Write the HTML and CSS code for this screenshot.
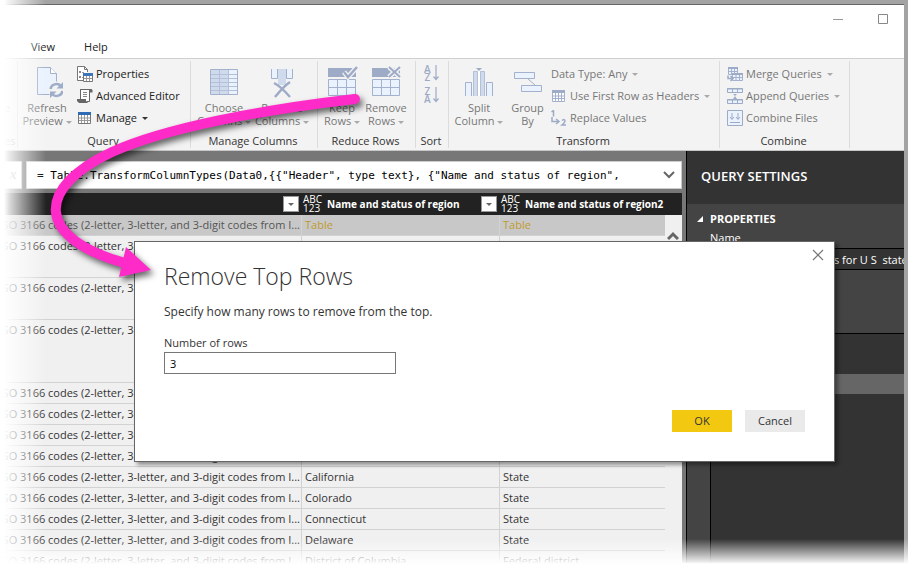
FILE: index.html
```html
<!DOCTYPE html>
<html lang="en">
<head>
<meta charset="utf-8">
<title>Query Editor</title>
<link rel="stylesheet" href="styles.css">
</head>
<body>
<div class="window">
  <header class="titlebar">
    <div class="window-buttons">
      <button type="button" aria-label="Minimize"><svg width="11" height="11" viewBox="0 0 11 11"><path d="M0 5.500h10" stroke="#999"/></svg></button>
      <button type="button" aria-label="Maximize"><svg width="11" height="11" viewBox="0 0 11 11"><path d="M.5.5h9v9h-9z" fill="none" stroke="#888"/></svg></button>
    </div>
    <nav class="tabs"><a href="#view">View</a><a href="#help">Help</a></nav>
  </header>

  <div class="ribbon">
    <section class="group group-cut">
      <div class="group-body"><span class="cut-text">e</span></div>
      <h2 class="cut-text">es</h2>
    </section>

    <section class="group group-query">
      <div class="group-body">
        <button type="button" class="big">
          <svg width="32" height="32" viewBox="0 0 32 32"><path d="M6.500 1.500h13l6 6v21h-19z" fill="#eaf2fd" stroke="#a3b1cd"/><path d="M19.500 1.500v6h6" fill="#fff" stroke="#a3b1cd"/><circle cx="25.500" cy="24" r="8.500" fill="#f3f3f3"/><path d="M19.500 23a6 5.500 0 0 1 10.500-3M31.500 25a6 5.500 0 0 1-10.500 3" fill="none" stroke="#9eadca" stroke-width="2.500"/><path d="M32 16v6.500h-6.500zM19 32v-6.500h6.500z" fill="#9eadca"/></svg>
          <span>Refresh</span><span>Preview <i class="caret"></i></span>
        </button>
        <div class="stack">
          <button type="button" class="small on"><svg width="16" height="16" viewBox="0 0 16 16"><path d="M6 14.500H.5V.5h7l3 3V6" fill="#fff" stroke="#777"/><path d="M7.500.5v3h3" fill="none" stroke="#777"/><path d="M2 5h2v2H2zM2 10h2v2H2z" fill="#888"/><path d="M5 6.500h2M5 11.500h1" stroke="#999"/><path d="M6.500 7.500h9v8h-9z" fill="#fff" stroke="#777"/><path d="M6 7h10v3H6z" fill="#3e74b8"/><path d="M7 12.500h8M9.500 10v5M12.500 10v5" stroke="#999"/></svg>Properties</button>
          <button type="button" class="small on"><svg width="16" height="16" viewBox="0 0 16 16"><path d="M3.500 11V1.500H14M12.500 4v8.500l-2 2" fill="none" stroke="#666"/><path d="M4 2h8v11H4z" fill="#fff"/><path d="M3.500 11V1.500h9v12h-3" fill="none" stroke="#666"/><path d="M12 1h2.500l1 1v2.500H12zM0 11h9v2l1.500 2H2l-2-2z" fill="#666"/><path d="M6 4.500h4M6 6.500h4M6 8.500h4" stroke="#888"/></svg>Advanced Editor</button>
          <button type="button" class="small on"><svg width="16" height="16" viewBox="0 0 16 16"><path d="M1.500 2.500h12v11h-12z" fill="#fff" stroke="#777"/><path d="M1 2h13v3H1z" fill="#2f6cb5"/><path d="M2 8h11M2 10.500h11M4.500 5v8M7.500 5v8M10.500 5v8" stroke="#999"/></svg>Manage <i class="caret"></i></button>
        </div>
      </div>
      <h2>Query</h2>
    </section>

    <section class="group group-columns">
      <div class="group-body">
        <button type="button" class="big">
          <svg width="32" height="32" viewBox="0 0 32 32"><path d="M2.500 3.500h27v25h-27z" fill="#eaf2fd"/><path d="M3 4h18v24H3z" fill="#cfdbec"/><path d="M3 8.500h26M3 12.500h26M3 16.500h26M3 20.500h26M3 24.500h26M11.500 4v24M20.500 4v24" stroke="#b4c0d8"/><path d="M2.500 3.500h27v25h-27z" fill="none" stroke="#a3b1cd"/></svg>
          <span>Choose</span><span>Columns <i class="caret"></i></span>
        </button>
        <button type="button" class="big">
          <svg width="32" height="32" viewBox="0 0 32 32"><path d="M5.500 3v9.500h6V3M20.500 3v9.500h6V3" fill="#eaf2fd" stroke="#a3b1cd"/><path d="M12 3h8v16h-8z" fill="#cfdbec"/><path d="M8 17c6 3 10 7 16 14M24 16C18 20 14 25 9 31" fill="none" stroke="#9eabc7" stroke-width="2.500"/></svg>
          <span>Remove</span><span>Columns <i class="caret"></i></span>
        </button>
      </div>
      <h2>Manage Columns</h2>
    </section>

    <section class="group group-rows">
      <div class="group-body">
        <button type="button" class="big">
          <svg width="32" height="32" viewBox="0 0 32 32"><path d="M2 2h28v9H2z" fill="#9eabc7"/><path d="M2.500 13.500h27v16h-27z" fill="#eaf2fd" stroke="#a3b1cd"/><path d="M3 21.500h26M11.500 14v15M20.500 14v15" stroke="#a3b1cd"/><path d="m18 6 4 5 9-10" fill="none" stroke="#f3f3f3" stroke-width="5"/><path d="m18 6 4 5 9-10" fill="none" stroke="#9eabc7" stroke-width="2.500"/></svg>
          <span>Keep</span><span>Rows <i class="caret"></i></span>
        </button>
        <button type="button" class="big">
          <svg width="32" height="32" viewBox="0 0 32 32"><path d="M2 2h28v9H2z" fill="#9eabc7"/><path d="M2.500 13.500h27v16h-27z" fill="#eaf2fd" stroke="#a3b1cd"/><path d="M3 21.500h26M11.500 14v15M20.500 14v15" stroke="#a3b1cd"/><path d="m19 1 11 10M30 1 19 11" fill="none" stroke="#f3f3f3" stroke-width="5"/><path d="m19 1 11 10M30 1 19 11" fill="none" stroke="#9eabc7" stroke-width="2"/></svg>
          <span>Remove</span><span>Rows <i class="caret"></i></span>
        </button>
      </div>
      <h2>Reduce Rows</h2>
    </section>

    <section class="group group-sort">
      <div class="group-body">
        <button type="button" class="sort" aria-label="Sort ascending"><span>A<br>Z</span><svg width="6" height="16" viewBox="0 0 6 16"><path d="M3 0v14M.5 11.500 3 14.500l2.500-3" fill="none" stroke="#9eabc7" stroke-width="1.200"/></svg></button>
        <button type="button" class="sort" aria-label="Sort descending"><span>Z<br>A</span><svg width="6" height="16" viewBox="0 0 6 16"><path d="M3 0v14M.5 11.500 3 14.500l2.500-3" fill="none" stroke="#9eabc7" stroke-width="1.200"/></svg></button>
      </div>
      <h2>Sort</h2>
    </section>

    <section class="group group-transform">
      <div class="group-body">
        <button type="button" class="big">
          <svg width="32" height="32" viewBox="0 0 32 32"><path d="M2.500 30V16.500h6V30M23.500 30V16.500h6V30" fill="#eaf2fd" stroke="#a3b1cd"/><path d="M10.500 30V5.500h4V30M17.500 30V5.500h4V30" fill="#cfdbec" stroke="#b4c0d8"/><path d="M16 5v25" stroke="#fff" stroke-width="2"/><path d="M13 2h6l-3 3z" fill="#9eabc7"/></svg>
          <span>Split</span><span>Column <i class="caret"></i></span>
        </button>
        <button type="button" class="big">
          <svg width="32" height="32" viewBox="0 0 32 32"><path d="M2.500 6.500h20v6h-20zM9.500 19.500h20v6h-20z" fill="#eaf2fd" stroke="#a3b1cd"/><path d="m16 13 7 6" stroke="#a3b1cd"/></svg>
          <span>Group</span><span>By</span>
        </button>
        <div class="stack">
          <button type="button" class="small">Data Type: Any <i class="caret"></i></button>
          <button type="button" class="small"><svg width="16" height="16" viewBox="0 0 16 16"><path d="M1.500 2.500h12v11h-12z" fill="#fff" stroke="#a3b1cd"/><path d="M1 2h13v3H1z" fill="#9eabc7"/><path d="M2 8h11M2 10.500h11M4.500 5v8M7.500 5v8M10.500 5v8" stroke="#a3b1cd"/></svg>Use First Row as Headers <i class="caret"></i></button>
          <button type="button" class="small"><svg width="16" height="16" viewBox="0 0 16 16"><path d="M.5 2 2.500.5v6M1 7v4.500h6M5 9l3 2.500L5 14M11 10.500q3-2 3 .5 0 1.500-3 4h4" fill="none" stroke="#9eabc7" stroke-width="1.500"/></svg>Replace Values</button>
        </div>
      </div>
      <h2>Transform</h2>
    </section>

    <section class="group group-combine">
      <div class="group-body">
        <div class="stack">
          <button type="button" class="small"><svg width="16" height="16" viewBox="0 0 16 16"><path d="M1.500 1.500h9v7h-9z" fill="#eaf2fd" stroke="#a3b1cd"/><path d="M1 1h10v2H1z" fill="#9eabc7"/><path d="M2 5.500h8M4.500 3v5M7.500 3v5" stroke="#a3b1cd"/><path d="M5.500 7.500h10v7h-10z" fill="#eaf2fd" stroke="#a3b1cd"/><path d="M5 7h11v2H5z" fill="#9eabc7"/><path d="M6 11.500h9M9 9v5M12.500 9v5" stroke="#a3b1cd"/><path d="M1 9.500v3h4M3.500 10l2.500 2.500L3.500 15" fill="none" stroke="#9eabc7" stroke-width="1.500"/></svg>Merge Queries <i class="caret"></i></button>
          <button type="button" class="small"><svg width="16" height="16" viewBox="0 0 16 16"><path d="M.5.5h15v4H.5zM.5 11.500h15v4H.5z" fill="#eaf2fd" stroke="#9eabc7"/><path d="M0 1h16M0 12h16M5.500 1v4M10.500 1v4M5.500 12v4M10.500 12v4" stroke="#9eabc7"/><path d="M6 6h4L8 8zM6 11h4L8 8z" fill="#9eabc7"/></svg>Append Queries <i class="caret"></i></button>
          <button type="button" class="small"><svg width="16" height="16" viewBox="0 0 16 16"><path d="M.5.5h15v15H.5z" fill="#eaf2fd" stroke="#9eabc7"/><path d="M5 3v6M11 3v6M3 7l2 2.500L7 7M9 7l2 2.500L13 7M3 12.500h10" fill="none" stroke="#9eabc7"/></svg>Combine Files</button>
        </div>
      </div>
      <h2>Combine</h2>
    </section>
  </div>

  <main class="workspace">
    <div class="editor">
      <div class="formula">
        <button type="button" class="fx" aria-label="Add step">x</button>
        <div class="formula-box">
          <input type="text" aria-label="Formula" value='= Table.TransformColumnTypes(Data0,{{"Header", type text}, {"Name and status of region",'>
          <button type="button" aria-label="Expand formula"><svg width="12" height="8" viewBox="0 0 12 8"><path d="m1 1 5 5 5-5" fill="none" stroke="#666" stroke-width="2"/></svg></button>
        </div>
      </div>
      <div class="grid">
        <table>
          <colgroup><col class="c1"><col class="c2"><col><col class="c4"></colgroup>
          <thead>
            <tr>
              <th><div class="head"><button type="button" class="filter" aria-label="Filter"><i class="caret"></i></button></div></th>
              <th><div class="head"><span class="type">ABC<br>123</span><span>Name and status of region</span><button type="button" class="filter" aria-label="Filter"><i class="caret"></i></button></div></th>
              <th colspan="2"><div class="head"><span class="type">ABC<br>123</span><span>Name and status of region2</span></div></th>
            </tr>
          </thead>
          <tbody>
            <tr class="selected"><td><div class="tail">DISO 3166 codes (2-letter, 3-letter, and 3-digit codes from I...</div></td><td><a href="#t1">Table</a></td><td><a href="#t2">Table</a></td><td class="bar"></td></tr>
            <tr class="h2"><td><div class="tail">DISO 3166 codes (2-letter, 3-letter, and 3-digit codes from I...</div></td><td></td><td></td><td class="bar"></td></tr>
            <tr class="h2"><td><div class="tail">DISO 3166 codes (2-letter, 3-letter, and 3-digit codes from I...</div></td><td></td><td></td><td class="bar"></td></tr>
            <tr class="h3"><td><div class="tail">DISO 3166 codes (2-letter, 3-letter, and 3-digit codes from I...</div></td><td></td><td></td><td class="bar"></td></tr>
            <tr><td><div class="tail">DISO 3166 codes (2-letter, 3-letter, and 3-digit codes from I...</div></td><td></td><td></td><td class="bar"></td></tr>
            <tr><td><div class="tail">DISO 3166 codes (2-letter, 3-letter, and 3-digit codes from I...</div></td><td></td><td></td><td class="bar"></td></tr>
            <tr><td><div class="tail">DISO 3166 codes (2-letter, 3-letter, and 3-digit codes from I...</div></td><td></td><td></td><td class="bar"></td></tr>
            <tr><td><div class="tail">DISO 3166 codes (2-letter, 3-letter, and 3-digit codes from I...</div></td><td></td><td></td><td class="bar"></td></tr>
            <tr><td><div class="tail">DISO 3166 codes (2-letter, 3-letter, and 3-digit codes from I...</div></td><td>California</td><td>State</td><td class="bar"></td></tr>
            <tr><td><div class="tail">DISO 3166 codes (2-letter, 3-letter, and 3-digit codes from I...</div></td><td>Colorado</td><td>State</td><td class="bar"></td></tr>
            <tr><td><div class="tail">DISO 3166 codes (2-letter, 3-letter, and 3-digit codes from I...</div></td><td>Connecticut</td><td>State</td><td class="bar"></td></tr>
            <tr><td><div class="tail">DISO 3166 codes (2-letter, 3-letter, and 3-digit codes from I...</div></td><td>Delaware</td><td>State</td><td class="bar"></td></tr>
            <tr><td><div class="tail">DISO 3166 codes (2-letter, 3-letter, and 3-digit codes from I...</div></td><td>District of Columbia</td><td>Federal district</td><td class="bar"></td></tr>
          </tbody>
        </table>
        <button type="button" class="scroll-up" aria-label="Scroll up"><svg width="12" height="10" viewBox="0 0 12 10"><path d="m1 8 5-5 5 5" fill="none" stroke="#666" stroke-width="3"/></svg></button>
      </div>
    </div>

    <aside class="settings">
      <h2>QUERY SETTINGS</h2>
      <section class="properties">
        <h3><svg width="6" height="6" viewBox="0 0 6 6"><path d="M6 0v6H0z" fill="#fff"/></svg>PROPERTIES</h3>
        <label for="qname">Name</label>
        <input id="qname" type="text" value="s for U S  state">
      </section>
      <div class="steps"><div class="step-selected"></div></div>
    </aside>
  </main>
</div>

<div class="fade-left"></div>
<div class="fade-bottom"></div>

<dialog open class="dialog" aria-labelledby="dialog-title">
  <button type="button" class="close" aria-label="Close"><svg width="12" height="12" viewBox="0 0 12 12"><path d="m1 1 10 10M11 1 1 11" stroke="#777" stroke-width="1.200"/></svg></button>
  <h1 id="dialog-title">Remove Top Rows</h1>
  <p>Specify how many rows to remove from the top.</p>
  <label for="rows">Number of rows</label>
  <input id="rows" type="text" value="3">
  <div class="actions">
    <button type="button" class="ok">OK</button>
    <button type="button">Cancel</button>
  </div>
</dialog>

<svg class="arrow" width="400" height="300" viewBox="0 0 400 300" aria-hidden="true">
  <path d="M355 99C260 110 165 128 112 152C35 188 35 238 125 263" fill="none" stroke="#ff2bc8" stroke-width="10"/>
  <circle cx="355" cy="99" r="5" fill="#ff2bc8"/>
  <path d="M126 247 151 270 119 277z" fill="#ff2bc8"/>
</svg>
</body>
</html>
```

FILE: styles.css
```css
* { box-sizing: border-box; }

body {
  margin: 0;
  height: 100vh;
  overflow: hidden;
  position: relative;
  display: flex;
  padding: 4px;
  background: #a3a3a3;
  font: 11px/14px "Open Sans", "Noto Sans", sans-serif;
  color: #333;
}

button, input { font: inherit; color: inherit; border: 0; padding: 0; margin: 0; background: none; }
h1, h2, h3, p { margin: 0; font: inherit; }
a { color: inherit; text-decoration: none; }
svg { flex: none; display: block; }

.window {
  flex: 1;
  min-width: 0;
  display: flex;
  flex-direction: column;
  overflow: hidden;
  background: #fff;
  border-top: 1px solid #666;
}

.titlebar { display: flex; flex-direction: column; border-bottom: 1px solid #d0d0d0; }
.window-buttons { display: flex; justify-content: flex-end; gap: 34px; height: 28px; padding: 0 15px; align-items: center; }
.tabs { display: flex; gap: 29px; height: 25px; padding: 7px 27px 0; color: #222; }

.ribbon { display: flex; height: 92px; background: #f3f3f3; border-bottom: 1px solid #c8c8c8; padding: 2px 0; }
.group { flex: none; display: flex; flex-direction: column; border-right: 1px solid #dcdcdc; white-space: nowrap; }
.group h2 { text-align: center; color: #333; padding-right: 2px; }
.group-body { height: 73px; display: flex; color: #777; }
.group-cut { width: 14px; }
.group-cut .group-body { align-items: center; padding-top: 21px; }
.group .cut-text { color: #aaa; text-align: left; }
.group-query { width: 173px; }
.group-columns { width: 127px; }
.group-rows { width: 98px; }
.group-sort { width: 33px; }
.group-transform { width: 271px; }
.group-combine { width: 130px; }
.group-columns .group-body { padding-left: 4px; }
.group-rows .group-body { padding-left: 2px; }
.group-transform .group-body { padding-left: 1px; }
.group-combine .group-body { padding-left: 7px; }

.big { width: 58px; display: flex; flex-direction: column; align-items: center; padding-top: 5px; line-height: 13px; }
.big svg { margin-bottom: 3px; }
.group-rows .big { width: 44px; }
.group-transform .big + .big { width: 39px; }
.stack { display: flex; flex-direction: column; padding-top: 2px; }
.group-query .stack { padding-left: 1px; }
.group-transform .stack { padding-left: 4px; }
.small { display: flex; align-items: center; gap: 3px; height: 22px; }
.small.on { color: #222; }
.caret { display: inline-block; width: 0; height: 0; border: 3px solid transparent; border-top-color: currentColor; border-bottom: 0; vertical-align: middle; }
.small .caret, .big .caret { color: #aaa; }
.small.on .caret { color: #333; }
.small .caret { margin-left: 2px; }
.group-sort .group-body { flex-direction: column; gap: 6px; padding: 4px 0 0 8px; }
.sort { display: flex; align-items: center; gap: 2px; color: #9eabc7; font-size: 10px; line-height: 8px; font-weight: 600; }

.workspace { flex: 1; min-height: 0; display: flex; background: #777; }
.editor { flex: 1; min-width: 0; display: flex; flex-direction: column; padding-right: 4px; }
.formula { display: flex; gap: 4px; padding: 10px 0 4px; }
.fx { width: 18px; height: 28px; background: #fff; border: 1px solid #ccc; font: italic bold 14px "Liberation Serif", serif; color: #bbb; }
.formula-box { flex: 1; display: flex; align-items: center; height: 28px; background: #fff; border: 1px solid #ccc; padding: 0 6px 0 10px; }
.formula-box input { flex: 1; min-width: 0; font: 11px "DejaVu Sans Mono", monospace; color: #000; }

.grid { flex: 1; min-height: 0; overflow: hidden; position: relative; background: #f0f0f0; }
table { width: 100%; border-collapse: separate; border-spacing: 0; table-layout: fixed; }
.c1 { width: 298px; }
.c2 { width: 198px; }
.c4 { width: 17px; }
th { height: 22px; padding: 0; background: #222; color: #fff; font-size: 10px; font-weight: 700; text-align: left; }
.head { display: flex; align-items: center; height: 22px; padding: 0 3px 0 1px; gap: 5px; white-space: nowrap; }
.type { line-height: 9px; font-weight: 400; }
.filter { width: 16px; height: 16px; margin-left: auto; background: #fff; border: 1px solid #999; color: #666; display: flex; align-items: center; justify-content: center; }
td { height: 21px; padding: 3px 3px 0; vertical-align: top; white-space: nowrap; overflow: hidden; border-right: 1px solid #d2d2d2; border-bottom: 1px solid #d2d2d2; }
td:first-child { padding-left: 0; padding-right: 1px; }
td:nth-child(3) { border-right: 0; }
td.bar { border: 0; background: #f0f0f0; }
.tail { display: flex; justify-content: flex-end; overflow: hidden; }
.selected { background: #c8c8c8; color: #555; }
.selected a { color: #bf9a30; }
.h2 td { height: 42px; }
.h3 td { height: 63px; }
.scroll-up { position: absolute; right: 3px; top: 38px; }

.settings { width: 218px; display: flex; flex-direction: column; background: #444; border-left: 1px solid #000; color: #fff; overflow: hidden; }
.settings h2 { height: 53px; padding: 15px 14px; background: #333; font-size: 13px; line-height: 20px; font-weight: 600; }
.properties { height: 129px; padding: 5px 0 0 23px; display: flex; flex-direction: column; }
.properties h3 { display: flex; align-items: center; gap: 7px; margin-left: -13px; font-weight: 700; line-height: 16px; height: 20px; }
.properties label { line-height: 17px; margin-bottom: 2px; }
.properties input { width: 100%; height: 22px; background: #333; border: 1px solid #000; border-right: 0; padding-left: 123px; }
.steps { flex: 1; margin-left: 23px; padding-top: 40px; background: #333; border: 1px solid #000; border-width: 1px 0 0 1px; }
.step-selected { height: 20px; background: #666; }

.fade-left { position: absolute; left: 0; top: 0; bottom: 0; width: 46px; background: linear-gradient(90deg, #fff 4px, rgba(255,255,255,.85) 9px, rgba(255,255,255,0)); pointer-events: none; }
.fade-bottom { position: absolute; left: 0; right: 0; bottom: 0; height: 28px; background: linear-gradient(0deg, #fff 3px, rgba(255,255,255,.9) 5px, rgba(255,255,255,0)); pointer-events: none; }

.dialog { position: absolute; left: 134px; right: 73px; top: 241px; width: auto; margin: 0; padding: 18px 29px 29px; border: 1px solid #666; background: #fff; color: #333; display: flex; flex-direction: column; box-shadow: 3px 3px 4px rgba(0,0,0,.4); }
.dialog h1 { font-size: 23px; line-height: 32px; font-weight: 300; }
.dialog p { margin-top: 12px; font-size: 12px; line-height: 16px; }
.dialog label { margin-top: 15px; line-height: 16px; }
.dialog input { width: 232px; height: 22px; margin-top: 1px; padding: 0 5px; border: 1px solid #777; color: #000; }
.actions { display: flex; justify-content: flex-end; gap: 13px; margin-top: 36px; }
.actions button { width: 60px; height: 22px; background: #eaeaea; }
.actions .ok { background: #f2c811; }
.close { position: absolute; right: 10px; top: 7px; }

.arrow { position: absolute; left: 0; top: 0; pointer-events: none; filter: drop-shadow(3px 4px 3px rgba(0,0,0,.6)); }
```
